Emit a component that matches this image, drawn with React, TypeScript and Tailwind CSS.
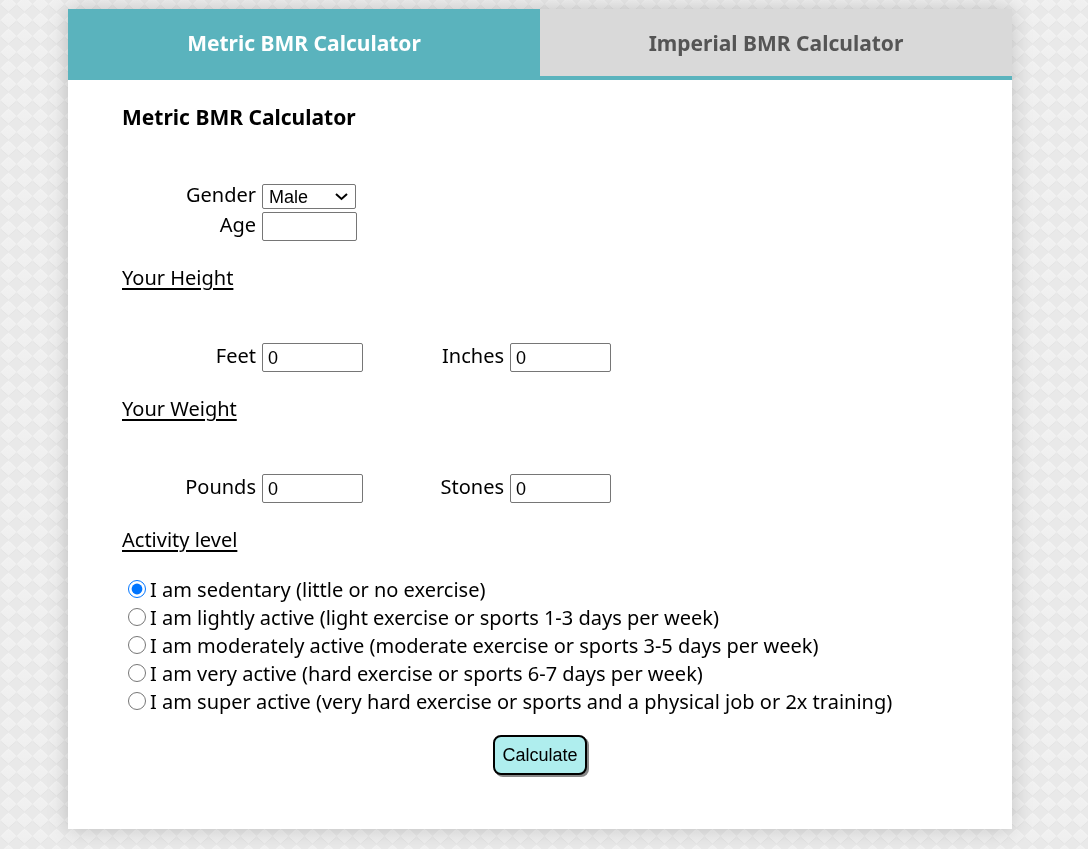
import { useState } from "react";

const activityLevels = [
  "I am sedentary (little or no exercise)",
  "I am lightly active (light exercise or sports 1-3 days per week)",
  "I am moderately active (moderate exercise or sports 3-5 days per week)",
  "I am very active (hard exercise or sports 6-7 days per week)",
  "I am super active (very hard exercise or sports and a physical job or 2x training)",
];

const fieldLabel = "pb-[3px] text-right";
const fieldBox =
  "h-[29px] rounded-[2px] border border-[#767676] bg-white px-[5px] font-['Liberation_Sans',sans-serif] text-[18px] text-black";
const sectionTitle = "underline decoration-2 underline-offset-[3px]";

function DiamondBackground() {
  return (
    <svg className="fixed inset-0 -z-10 h-full w-full" aria-hidden="true">
      <defs>
        <linearGradient id="facet" x1="0" y1="0" x2="0" y2="1">
          <stop offset="0" stopColor="#f1f1f1" />
          <stop offset="1" stopColor="#efefef" />
        </linearGradient>
        <pattern id="diamonds" width="16" height="16" y="-4" patternUnits="userSpaceOnUse">
          <rect width="16" height="16" fill="#e9e9e9" />
          <path d="M1 9 L8.5 1.5 L16 9 L8.5 16 Z" fill="url(#facet)" />
          <path d="M1 8.5 L7.5 2 Q8.5 1.2 9.5 2 L16 8.5" fill="none" stroke="#f7f7f7" strokeWidth="1" />
          <path d="M1 9.5 L8.5 16 L16 9.5" fill="none" stroke="#e2e2e2" strokeWidth="0.8" />
        </pattern>
      </defs>
      <rect width="100%" height="100%" fill="url(#diamonds)" />
    </svg>
  );
}

function NumberField({ id, label, second = false }: { id: string; label: string; second?: boolean }) {
  return (
    <div className="flex h-[29px] items-center gap-[6px]">
      <label htmlFor={id} className={`${fieldLabel} ${second ? "w-[141px]" : "w-[134px]"}`}>
        {label}
      </label>
      <input id={id} type="text" inputMode="numeric" defaultValue="0" className={`${fieldBox} w-[101px]`} />
    </div>
  );
}

export default function App() {
  const [tab, setTab] = useState("Metric");
  const [activity, setActivity] = useState(0);

  return (
    <div className="isolate min-h-screen pt-[9px] pr-[76px] pb-5 pl-[68px] font-['Noto_Sans',sans-serif] text-[20px] leading-[30px] text-black">
      <DiamondBackground />
      <main className="bg-white shadow-[0_0_20px_rgba(0,0,0,0.2)]">
        <div role="tablist" className="grid grid-cols-2 border-b-4 border-[#5ab3bd]">
          {["Metric", "Imperial"].map((name) => (
            <button
              key={name}
              type="button"
              role="tab"
              aria-selected={tab === name}
              onClick={() => setTab(name)}
              className={`h-[67px] text-[21px] font-bold ${tab === name ? "bg-[#5ab3bd] text-white" : "bg-[#d9d9d9] text-[#555555]"}`}
            >
              {name} BMR Calculator
            </button>
          ))}
        </div>

        <form className="px-[54px] pt-[22px] pb-[54px]" onSubmit={(e) => e.preventDefault()}>
          <h2 className="text-[21px] font-bold">{tab} BMR Calculator</h2>

          <div className="mt-[52px] flex flex-col gap-[3px]">
            <div className="flex h-[25px] items-center gap-[6px]">
              <label htmlFor="gender" className={`${fieldLabel} w-[134px]`}>
                Gender
              </label>
              <div className="relative">
                <select
                  id="gender"
                  className="block h-[25px] w-[94px] appearance-none rounded-[2px] border border-[#767676] bg-white pt-[1px] pl-[6px] font-['Liberation_Sans',sans-serif] text-[18px] leading-[22px]"
                >
                  <option>Male</option>
                  <option>Female</option>
                </select>
                <svg
                  className="pointer-events-none absolute top-[8px] right-[8px] h-[9px] w-[13px]"
                  viewBox="0 0 13 9"
                  fill="none"
                  stroke="#000"
                  strokeWidth="2"
                  aria-hidden="true"
                >
                  <path d="M1 2 L6.5 7 L12 2" />
                </svg>
              </div>
            </div>
            <div className="flex h-[29px] items-center gap-[6px]">
              <label htmlFor="age" className={`${fieldLabel} w-[134px]`}>
                Age
              </label>
              <input id="age" type="text" inputMode="numeric" className={`${fieldBox} w-[95px]`} />
            </div>
          </div>

          <h3 className={`mt-[22px] ${sectionTitle}`}>Your Height</h3>
          <div className="mt-[50px] flex h-[29px] items-center">
            <NumberField id="feet" label="Feet" />
            <NumberField id="inches" label="Inches" second />
          </div>

          <h3 className={`mt-[22px] ${sectionTitle}`}>Your Weight</h3>
          <div className="mt-[50px] flex h-[29px] items-center">
            <NumberField id="pounds" label="Pounds" />
            <NumberField id="stones" label="Stones" second />
          </div>

          <fieldset className="mt-[22px]">
            <legend className={sectionTitle}>Activity level</legend>
            <div className="mt-[21px] pl-[6px] leading-[28px]">
              {activityLevels.map((text, i) => (
                <label key={text} className="flex items-center gap-[4px]">
                  <input
                    type="radio"
                    name="activity"
                    checked={activity === i}
                    onChange={() => setActivity(i)}
                    className="mb-[2px] size-[18px] shrink-0 accent-[#0075ff]"
                  />
                  {text}
                </label>
              ))}
            </div>
          </fieldset>

          <button
            type="submit"
            className="mx-auto mt-[19px] block h-[40px] rounded-[8px] border-2 border-black bg-[#afeeee] px-[7px] font-['Liberation_Sans',sans-serif] text-[18px] leading-[34px] shadow-[2px_2px_0_#888888]"
          >
            Calculate
          </button>
        </form>
      </main>
    </div>
  );
}
